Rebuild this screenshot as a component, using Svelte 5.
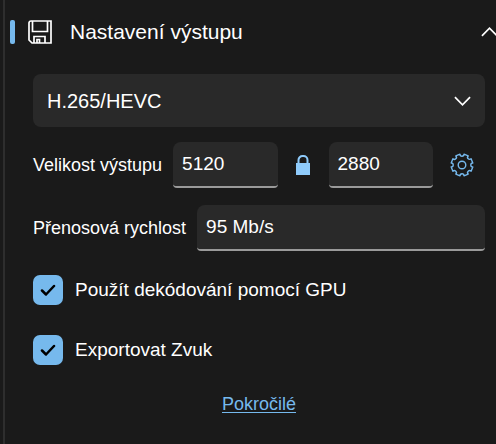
<script lang="ts">
  let codec = $state("H.265/HEVC");
  let width = $state("5120");
  let height = $state("2880");
  let bitrate = $state("95 Mb/s");
  let useGpu = $state(true);
  let exportAudio = $state(true);
  let open = $state(true);
  let locked = $state(true);
</script>

<section class="panel">
  <button class="header" aria-expanded={open} onclick={() => (open = !open)}>
    <span class="marker"></span>
    <svg class="save" viewBox="0 0 24 24">
      <path d="M1 3a2 2 0 0 1 2-2h20v22H4l-3-3z" />
      <path d="M4.500 1v10.500h15V1" />
      <path d="M6 23v-6.500h11V23" />
      <path d="M9 23v-3.500h2.500V23" />
    </svg>
    <span class="title">Nastavení výstupu</span>
    <svg class="chevron" class:closed={!open} viewBox="0 0 18 10">
      <path d="M1 9l8-8 8 8" />
    </svg>
  </button>

  {#if open}
    <div class="body">
      <div class="select">
        <select bind:value={codec} aria-label="Kodek">
          <option>H.265/HEVC</option>
        </select>
        <svg class="chevron closed" viewBox="0 0 18 10">
          <path d="M1 9l8-8 8 8" />
        </svg>
      </div>

      <div class="row size">
        <label for="width">Velikost výstupu</label>
        <input id="width" class="field" type="text" bind:value={width}>
        <button
          class="icon lock"
          aria-label="Zachovat poměr stran"
          aria-pressed={locked}
          onclick={() => (locked = !locked)}
        >
          <svg viewBox="0 0 14 20">
            <path class="shackle" d="M2.500 9V5a4 4 0 0 1 4-4h1a4 4 0 0 1 4 4v4" />
            <rect y="8" width="14" height="12" />
          </svg>
        </button>
        <input class="field" type="text" aria-label="Výška" bind:value={height}>
        <button class="icon gear" aria-label="Nastavení velikosti">
          <svg viewBox="-12 -12 24 24">
            <circle r="3.800" />
            <path d="M10.800-2A2 2 0 0 0 10.800 2L9.100 6.200A2 2 0 0 0 6.200 9.100L2 10.800A2 2 0 0 0-2 10.800L-6.200 9.100A2 2 0 0 0-9.100 6.200L-10.800 2A2 2 0 0 0-10.800-2L-9.100-6.200A2 2 0 0 0-6.200-9.100L-2-10.800A2 2 0 0 0 2-10.800L6.200-9.100A2 2 0 0 0 9.100-6.200z" />
          </svg>
        </button>
      </div>

      <div class="row">
        <label for="bitrate">Přenosová rychlost</label>
        <input id="bitrate" class="field" type="text" bind:value={bitrate}>
      </div>

      <label class="check">
        <input type="checkbox" bind:checked={useGpu}>
        <svg viewBox="0 0 16 12"><path d="M2 6.500l4 4 8-8.500" /></svg>
        <span>Použít dekódování pomocí GPU</span>
      </label>

      <label class="check">
        <input type="checkbox" bind:checked={exportAudio}>
        <svg viewBox="0 0 16 12"><path d="M2 6.500l4 4 8-8.500" /></svg>
        <span>Exportovat Zvuk</span>
      </label>

      <a href="#advanced">Pokročilé</a>
    </div>
  {/if}
</section>

<style>
  :global(body) {
    background: #1a1a1a;
    overflow-x: hidden;
  }

  .panel {
    box-sizing: border-box;
    min-height: 100vh;
    margin-left: 3px;
    border-left: 2px solid #2e2e2e;
    overflow: hidden;

    color: #fff;
    font-family: "Liberation Sans", Arial, sans-serif;
    font-size: 18px;
  }

  button,
  input,
  select {
    margin: 0;
    padding: 0;
    border: none;
    background: none;
    color: inherit;
    font: inherit;
  }

  svg {
    flex: none;
    fill: none;
    stroke: #fff;
  }

  /* Header */
  .header {
    display: flex;
    align-items: center;
    width: 100%;
    height: 64px;
    padding-left: 5px;
    text-align: left;
  }

  .marker {
    width: 5px;
    height: 24px;
    margin-right: 13px;
    border-radius: 2px;
    background: #76b9ed;
  }

  .save {
    width: 24px;
    height: 24px;
    margin-right: 18px;
    stroke-width: 1.7;
  }

  .title {
    flex: 1;
    font-size: 21px;
  }

  .chevron {
    width: 17px;
    height: 10px;
    stroke-width: 1.8;
  }

  .header .chevron {
    margin-right: -2px;
  }

  .closed {
    transform: rotate(180deg);
  }

  /* Settings */
  .body {
    display: flex;
    flex-direction: column;
    padding: 10px 11px 24px 28px;
  }

  .select {
    position: relative;
    margin-bottom: 15px;
  }

  .select select {
    appearance: none;
    width: 100%;
    height: 53px;
    padding: 0 44px 0 14px;
    border-radius: 8px;
    background: #292929;
    font-size: 20px;
  }

  .select .chevron {
    position: absolute;
    right: 14px;
    top: 22px;
    pointer-events: none;
  }

  .row {
    display: flex;
    align-items: center;
    margin-bottom: 17px;
  }

  .row label {
    margin-right: 11px;
    white-space: nowrap;
  }

  .field {
    box-sizing: border-box;
    flex: 1;
    min-width: 0;
    height: 46px;
    padding: 0 9px;
    border-bottom: 2px solid #9a9a9a;
    border-radius: 8px 8px 4px 4px;
    background: #292929;
    font-size: 19px;
  }

  .icon {
    display: flex;
    align-items: center;
    justify-content: center;
    height: 46px;
  }

  .lock {
    width: 51px;
  }

  .lock svg {
    width: 14px;
    height: 20px;
    fill: #8fcbfb;
    stroke: none;
  }

  .lock .shackle {
    fill: none;
    stroke: #8fcbfb;
    stroke-width: 2;
  }

  .gear {
    width: 52px;
    padding-left: 6px;
  }

  .gear svg {
    width: 24px;
    height: 24px;
    stroke: #76b9ed;
    stroke-width: 1.4;
    stroke-linejoin: round;
  }

  .check {
    position: relative;
    display: flex;
    align-items: center;
    gap: 12px;
    margin: 7px 0 23px;
    font-size: 19px;
  }

  .check input {
    appearance: none;
    width: 30px;
    height: 30px;
    border-radius: 7px;
    background: #292929;
  }

  .check input:checked {
    background: #76b9ed;
  }

  .check svg {
    position: absolute;
    left: 7px;
    width: 16px;
    height: 12px;
    stroke: #000;
    stroke-width: 2.5;
    stroke-linecap: round;
    stroke-linejoin: round;
    pointer-events: none;
  }

  .check input:not(:checked) + svg {
    display: none;
  }

  a {
    align-self: center;
    margin-top: 6px;
    color: #76b9ed;
    text-underline-offset: 2px;
  }
</style>
